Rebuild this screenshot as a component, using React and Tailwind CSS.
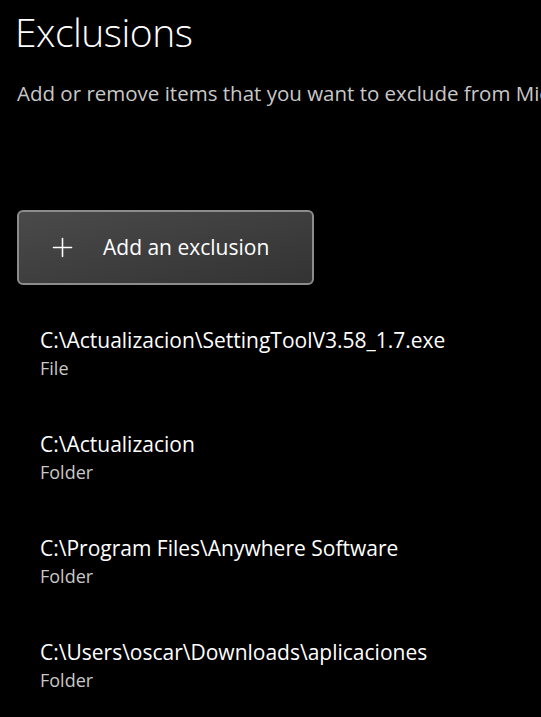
import { Plus } from 'lucide-react'

const ITEMS = [
  { path: 'C:\\Actualizacion\\SettingToolV3.58_1.7.exe', type: 'File' },
  { path: 'C:\\Actualizacion', type: 'Folder' },
  { path: 'C:\\Program Files\\Anywhere Software', type: 'Folder' },
  { path: 'C:\\Users\\oscar\\Downloads\\aplicaciones', type: 'Folder' },
]

export default function App() {
  return (
    <div className="w-[541px] h-[717px] bg-black overflow-hidden font-['Open_Sans','Noto_Sans',sans-serif] text-white">
      {/* Header */}
      <h1 className="pl-[15px] pt-[6px] text-[39px] leading-[52px] font-light tracking-[-0.5px]">Exclusions</h1>
      <p className="pl-[17px] mt-[21px] text-[20.5px] leading-[28px] text-[#c8c8c8] whitespace-nowrap">
        Add or remove items that you want to exclude from Microsoft Defender Antivirus scans.
      </p>

      {/* Add button */}
      <button className="ml-[17px] mt-[103px] w-[297px] h-[75px] flex items-center rounded-[6px] border-2 border-[#8c8c8c] bg-gradient-to-br from-[#4a4a4a] to-[#333333]">
        <Plus className="ml-[28px] w-[31px] h-[31px] text-white" strokeWidth={1.2} />
        <span className="ml-[25px] text-[21px] text-white">Add an exclusion</span>
      </button>

      {/* List */}
      <div className="mt-[41px] pl-[40px] flex flex-col gap-[48px]">
        {ITEMS.map(it => (
          <div key={it.path} className="flex flex-col">
            <span className="text-[21px] leading-[28px] whitespace-nowrap">{it.path}</span>
            <span className="text-[18px] leading-[28px] text-[#c8c8c8]">{it.type}</span>
          </div>
        ))}
      </div>
    </div>
  )
}
